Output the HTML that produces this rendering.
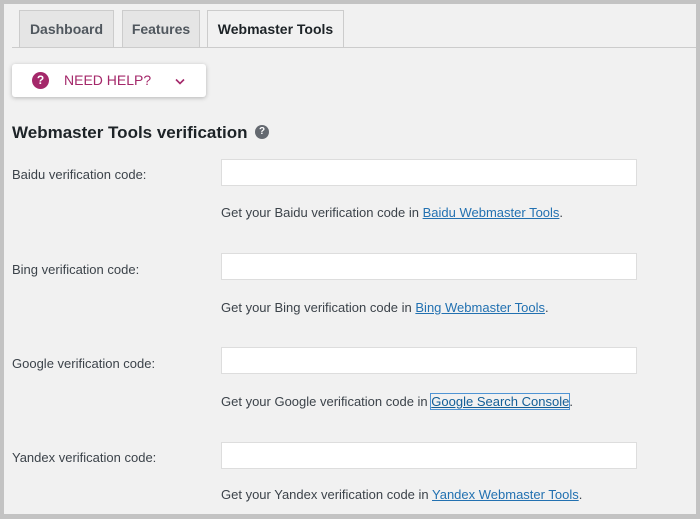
<!DOCTYPE html>
<html><head><style>
*{box-sizing:border-box;margin:0;padding:0}
body{width:700px;height:519px;background:#c3c3c3;font-family:"Liberation Sans",sans-serif;color:#3c434a;overflow:hidden;position:relative}
.pg{position:absolute;left:4px;top:4px;width:692px;height:510px;background:#f1f1f1;overflow:hidden}
.tab{position:absolute;top:6px;height:37px;border:1px solid #ccc;border-bottom:none;background:#e5e5e5;font-size:14px;font-weight:bold;color:#50575e;text-align:center;line-height:36px}
.tab.a{background:#f1f1f1;color:#1d2327;height:38px}
.line{position:absolute;left:8px;right:0;top:43px;border-top:1px solid #ccc}
.help{position:absolute;left:8px;top:60px;width:194px;height:33px;background:#fff;border-radius:3px;box-shadow:0 1px 4px rgba(0,0,0,.25);color:#a4286a;font-size:14px;line-height:33px}
.q{position:absolute;width:14px;height:14px;border-radius:50%;color:#fff;font-size:10px;font-weight:bold;text-align:center;line-height:14px}
h2{position:absolute;left:8px;top:119px;font-size:17px;font-weight:bold;color:#1d2327}
.lb{position:absolute;left:8px;font-size:13px;color:#3c434a}
.in{position:absolute;left:217px;width:416px;height:27px;background:#fff;border:1px solid #ddd}
.d{position:absolute;left:217px;font-size:13px;color:#3c434a}
.d a{color:#2271b1;text-decoration:underline}
</style></head><body><div class="pg">
<div class="tab" style="left:15px;width:95px">Dashboard</div>
<div class="tab" style="left:118px;width:78px">Features</div>
<div class="tab a" style="left:203px;width:137px">Webmaster Tools</div>
<div class="line"></div>
<div class="help"><span class="q" style="left:20px;top:8px;width:17px;height:17px;line-height:17px;font-size:12px;background:#a4286a">?</span><span style="position:absolute;left:52px">NEED HELP?</span><svg style="position:absolute;left:163px;top:14px" width="10" height="7" viewBox="0 0 10 7"><path d="M1 1.5L5 5.5L9 1.5" fill="none" stroke="#a4286a" stroke-width="1.6"/></svg></div>
<h2>Webmaster Tools verification</h2>
<span class="q" style="left:251px;top:121px;background:#646970">?</span>
<div class="lb" style="top:163px">Baidu verification code:</div>
<div class="in" style="top:155px"></div>
<div class="d" style="top:201px">Get your Baidu verification code in <a>Baidu Webmaster Tools</a>.</div>
<div class="lb" style="top:258px">Bing verification code:</div>
<div class="in" style="top:249px"></div>
<div class="d" style="top:296px">Get your Bing verification code in <a>Bing Webmaster Tools</a>.</div>
<div class="lb" style="top:352px">Google verification code:</div>
<div class="in" style="top:343px"></div>
<div class="d" style="top:390px">Get your Google verification code in <a style="outline:1px solid #4f94d4;color:#135e96">Google Search Console</a>.</div>
<div class="lb" style="top:446px">Yandex verification code:</div>
<div class="in" style="top:438px"></div>
<div class="d" style="top:483px">Get your Yandex verification code in <a>Yandex Webmaster Tools</a>.</div>
</div></body></html>
